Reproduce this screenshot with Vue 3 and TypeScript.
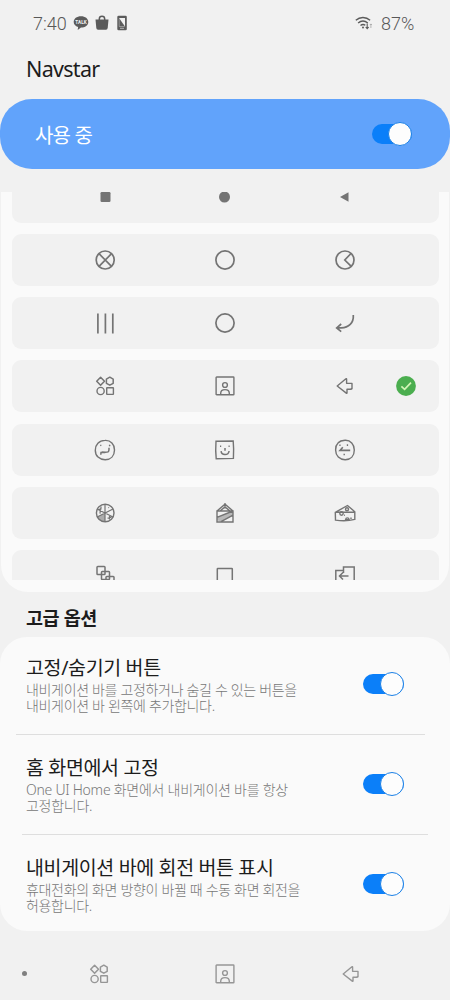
<script setup lang="ts">
import { ref } from 'vue'

interface Option {
  id: string
  title: string
  lines: string[]
  on: boolean
}

const squares =
  '<path d="M7.600 3.200 11.500 7.200 7.600 11.200 3.700 7.200Z" stroke-width="1.500" stroke-linejoin="round"/><path d="M16.800 3.200l3.400 1.900v4.200l-3.400 1.900-3.400-1.900V5.100Z" stroke-width="1.500" stroke-linejoin="round"/><circle cx="7.600" cy="17" r="3.600"/><rect x="13.700" y="13.700" width="6.700" height="6.700" rx=".4"/>'
const person =
  '<rect x="3.1" y="3" width="17.8" height="17.8" rx=".6"/><circle cx="12" cy="11" r="2.400"/><path d="M7.700 20.500v-1.300c0-2.300 1.900-3.600 4.300-3.600s4.300 1.300 4.300 3.600v1.300"/>'
const arrow = '<path d="M4.200 12 12.900 4.800q.7-.4.7.4v4h.7V9.400H19v5.400h-.8v.5H14v3.500q0 .8-.7.3Z" stroke-linejoin="round"/>'
const ring = '<circle cx="12" cy="12" r="9.100" stroke-width="1.700"/>'

const icons: Record<string, string> = {
  stop: '<rect x="7.5" y="7" width="10" height="10" rx="1.2" fill="currentColor" stroke="none"/>',
  dot: '<circle cx="11.5" cy="12" r="5.5" fill="currentColor" stroke="none"/>',
  play: '<path d="M7 12 15.500 7.200v9.600Z" fill="currentColor" stroke="none"/>',
  cross: '<g stroke-width="1.7"><circle cx="12.200" cy="12" r="9"/><path d="M6 5.7 18.500 18.300M18.500 5.700 6 18.300"/></g>',
  ring,
  clock: '<g stroke-width="1.7"><circle cx="12" cy="12" r="9"/><path d="M18 5.5 11.8 12l6.2 6.2"/></g>',
  bars: '<path d="M4.900 2.500v20M12.400 2.500v20M19.800 2.500v20" stroke-width="1.700"/>',
  back: '<path d="M20.300 4c.6 8.200-4.800 12.700-12 12.900H4.200M8.200 13l-4.500 3.900 4.500 3.700" stroke-width="1.700"/>',
  squares,
  person,
  arrow,
  faceA:
    '<path d="M12 2.4c5.7-.3 9.6 3.9 9.5 9.5-.1 5.9-3.7 9.7-9.3 9.8-6 0-9.900-3.800-9.900-9.500C2.300 6.600 6 2.500 12 2.400Z"/><path d="M7.300 7.200l1 .5M16 7.800l1.300-.6M16 9.800c.1 2.700-.3 3.900-.9 4.100-.6.200-5 .2-6.400.1M7.800 16.800l.2-2.300h4.200" stroke-width="1.500"/>',
  faceB:
    '<path d="M3 3.300 20.200 3c.6 5.800.5 11.800.2 17.400l-17.200.3C2.500 14.700 2.600 9 3 3.300Z"/><path d="M7 8.300h1.200M15.500 8.300h1.200M12 10v2.800M8.100 13.100c.3 4.500 7.300 4.700 8-.1" stroke-width="1.500"/>',
  faceC:
    '<path d="M12 2.300c5.500-.3 9.400 4 9.300 9.800 0 5.700-3.500 9.500-9 9.600-5.800.1-9.600-3.800-9.700-9.700C2.600 6.200 6.200 2.600 12 2.300Z"/><path d="M6.300 7.300h1.300M13.800 7.100h1.300M9.800 9.200 7 12.400h10.200M10.500 16.500h1.400" stroke-width="1.600"/>',
  pizza:
    '<path d="M12 12v8.700C8 20.700 5 19 4 16Z" fill="currentColor" fill-opacity=".55" stroke="none"/><circle cx="12.200" cy="12" r="8.800"/><path d="M12 3v18M4 8l16 8M4.200 16 20 8M5.500 8.500l3-.6M7 12.600l.4-5.300M15.300 6.500l.8.300M14.500 17.300l4-1.200M16.500 14v4.500M8 5.500v2" stroke-width="1.200"/>',
  cake:
    '<path d="M4 19.500v-3.300L20 9.700v4.700L9 20.500Z" fill="currentColor" fill-opacity=".45" stroke="none"/><path d="M4 10v11h16V10Zm0 0 8-6.800L20 10M12 2v5.500M7 10l5-4 5 4M4 16.400 20 10M8 20.700l12-6.500"/>',
  cheese:
    '<path d="M2.300 11.300 14.500 4.500l7.300 6.200v7.700c-6.500 1.700-13 1.700-19.300.7ZM2.300 11.300l19.500-.2"/><circle cx="14" cy="8.200" r="1.500"/><circle cx="8.500" cy="12.500" r="1.700"/><path d="M11 14.200h.8M12.600 18.700c.3-2.500 3.200-2.500 3.500 0ZM18 16.500v1.500"/>',
  stack:
    '<g stroke-width="1.500"><rect x="4" y="2.500" width="8" height="8" rx=".8"/><rect x="8.500" y="7.500" width="8" height="8" rx=".8"/><rect x="13" y="12.500" width="8" height="8" rx=".8"/></g>',
  frame: '<rect x="4.300" y="4.500" width="15" height="16" rx=".6" stroke-width="1.500"/>',
  exit: '<path d="M10.500 6.500H2.800V20M10.500 9V3h10.700v18M15.500 12H6.500M10 8.500 6.500 12l3.500 3.500" stroke-width="1.500"/>',
}

const styles: string[][] = [
  ['stop', 'dot', 'play'],
  ['cross', 'ring', 'clock'],
  ['bars', 'ring', 'back'],
  ['squares', 'person', 'arrow'],
  ['faceA', 'faceB', 'faceC'],
  ['pizza', 'cake', 'cheese'],
  ['stack', 'frame', 'exit'],
]

const selected = ref(3)
const enabled = ref(true)
const options = ref<Option[]>([
  { id: 'lock', title: '고정/숨기기 버튼', lines: ['내비게이션 바를 고정하거나 숨길 수 있는 버튼을', '내비게이션 바 왼쪽에 추가합니다.'], on: true },
  { id: 'home', title: '홈 화면에서 고정', lines: ['One UI Home 화면에서 내비게이션 바를 항상', '고정합니다.'], on: true },
  { id: 'rotate', title: '내비게이션 바에 회전 버튼 표시', lines: ['휴대전화의 화면 방향이 바뀔 때 수동 화면 회전을', '허용합니다.'], on: true },
])
</script>

<template>
  <div class="screen">
    <header class="status">
      <span class="time">7:40</span>
      <svg class="talk" width="16" height="16" viewBox="0 0 16 16">
        <path d="M8 1.300c4.200 0 7.300 2.400 7.300 5.600S12.200 12.500 8 12.500L4.700 15l.4-3C2.400 11.100.7 9.200.7 6.900.7 3.700 3.800 1.300 8 1.300Z" fill="#5b5b5b" />
        <text x="8" y="8.600" text-anchor="middle" font-size="4.700" font-weight="700" fill="#f1f1f1">TALK</text>
      </svg>
      <svg class="bag" width="14" height="16" viewBox="0 0 14 16">
        <path d="M4.300 5V4a2.700 2.700 0 0 1 5.400 0v1" fill="none" stroke="#5b5b5b" stroke-width="1.500" />
        <path d="M.5 4.500h13l-.8 8.500q-.2 1.700-1.700 1.700H3q-1.500 0-1.700-1.700Z" fill="#5b5b5b" />
      </svg>
      <svg class="phone" width="10" height="16" viewBox="0 0 10 16">
        <rect width="9.500" height="14.500" x=".3" y=".8" rx="1.300" fill="#5b5b5b" />
        <path d="M2 3h6v8.500Z" fill="#f1f1f1" />
        <path d="M2.200 3.500v8h5.500" fill="none" stroke="#bbb" stroke-width=".6" />
        <path d="M3 13.300h4" stroke="#ddd" stroke-width=".7" />
      </svg>
      <svg class="wifi" width="18" height="16" viewBox="0 0 18 16">
        <g fill="none" stroke="#5b5b5b" stroke-width="1.400">
          <path d="M.8 5.300c4.100-3.700 10.200-3.700 14.300 0M3.100 8c2.900-2.500 6.800-2.500 9.700 0M5.500 10.500c1.500-1.200 3.300-1.300 4.800-.2" />
          <path d="M12.200 8.500v5M10.700 12l1.500 1.700 1.500-1.700" stroke-width="1.100" />
          <path d="M15.900 13V9M14.900 10l1-1.100 1 1.100" stroke="#999" stroke-width=".7" />
        </g>
        <circle cx="8" cy="12.600" r="1" fill="#5b5b5b" />
      </svg>
      <span class="battery">87%</span>
    </header>

    <h1 class="app-title">Navstar</h1>

    <section class="master">
      <span class="master-label">사용 중</span>
      <button class="toggle small" :class="{ on: enabled }" @click="enabled = !enabled"><i class="knob"></i></button>
    </section>

    <section class="panel">
      <div class="viewport">
        <div v-for="(row, r) in styles" :key="r" class="style-row" @click="selected = r">
          <svg v-for="(name, c) in row" :key="c" class="icon" viewBox="0 0 24 24" v-html="icons[name]"></svg>
          <svg v-if="selected === r" class="check" viewBox="0 0 20 20">
            <circle cx="10" cy="10" r="9.900" fill="#4bae4f" />
            <path d="M5.400 10.300 8.600 13.300 15 6.700" fill="none" stroke="#d3f5b6" stroke-width="1.700" />
          </svg>
        </div>
      </div>
    </section>

    <h2 class="section-title">고급 옵션</h2>

    <section class="card">
      <div v-for="o in options" :key="o.id" class="option" :class="o.id">
        <div class="copy">
          <div class="option-title">{{ o.title }}</div>
          <div v-for="line in o.lines" :key="line" class="line">{{ line }}</div>
        </div>
        <button class="toggle" :class="{ on: o.on }" @click="o.on = !o.on"><i class="knob"></i></button>
      </div>
    </section>

    <nav class="navbar">
      <i class="pin-dot"></i>
      <svg class="icon" viewBox="0 0 24 24" v-html="squares"></svg>
      <svg class="icon" viewBox="0 0 24 24" v-html="person"></svg>
      <svg class="icon" viewBox="0 0 24 24" v-html="arrow"></svg>
    </nav>
  </div>
</template>

<style>
body {
  margin: 0;
  background: #f1f1f1;
}
</style>

<style scoped>
.screen {
  width: 450px;
  height: 1000px;
  overflow: hidden;
  display: flex;
  flex-direction: column;
  background: #f1f1f1;
  color: #1c1c1c;
  font-family: 'Noto Sans', 'Noto Sans CJK KR', sans-serif;
}
.status {
  height: 46px;
  box-sizing: border-box;
  padding: 0 36px 0 33px;
  display: flex;
  align-items: center;
  color: #585858;
  font-family: Roboto, sans-serif;
  font-size: 18px;
  font-weight: 300;
}
.time {
  width: 40px;
}
.bag {
  margin-left: 6px;
}
.phone {
  margin-left: 8px;
}
.wifi {
  margin-left: auto;
}
.battery {
  margin-left: 8px;
  width: 33px;
  white-space: nowrap;
}
.app-title {
  margin: 0;
  height: 53px;
  padding-left: 26px;
  line-height: 46px;
  font-size: 21.500px;
  font-weight: 400;
  letter-spacing: -0.700px;
}
.master {
  height: 70px;
  box-sizing: border-box;
  padding: 0 38px 0 35px;
  display: flex;
  align-items: center;
  justify-content: space-between;
  border-radius: 32px;
  background: #61a3fb;
}
.master-label {
  padding-top: 3px;
  color: #fff;
  font-size: 20px;
  line-height: 30px;
  letter-spacing: -0.800px;
}
.toggle {
  flex: none;
  width: 41px;
  height: 20px;
  padding: 0;
  border: 0;
  border-radius: 10px;
  display: flex;
  align-items: center;
  justify-content: flex-start;
  background: #b5b5b5;
}
.toggle.on {
  justify-content: flex-end;
  background: #0b7ff9;
}
.toggle.small {
  width: 40px;
}
.knob {
  flex: none;
  box-sizing: border-box;
  width: 24px;
  height: 24px;
  border: 1px solid #1b80e6;
  border-radius: 50%;
  background: #fdfdfd;
}
.panel {
  margin: 23px 1px 0;
  height: 400px;
  border-radius: 0 0 27px 27px;
  background: #fafafa;
}
.viewport {
  height: 388px;
  overflow: hidden;
  display: flex;
  flex-direction: column;
  gap: 11.300px;
}
.style-row {
  flex: none;
  height: 52px;
  margin: 0 10px 0 11px;
  box-sizing: border-box;
  padding-left: 81px;
  display: flex;
  align-items: center;
  gap: 96px;
  border-radius: 9px;
  background: #f1f1f1;
  color: #747474;
}
.style-row:first-child {
  margin-top: -21.500px;
}
.icon {
  flex: none;
  width: 24px;
  height: 24px;
  fill: none;
  stroke: currentColor;
  stroke-width: 1.400;
}
.check {
  flex: none;
  width: 20px;
  height: 20px;
  margin-left: -57px;
}
.section-title {
  margin: 0;
  height: 45px;
  padding-left: 26px;
  line-height: 52px;
  font-size: 18.500px;
  font-weight: 700;
  letter-spacing: -0.400px;
}
.card {
  height: 294px;
  border-radius: 27px;
  background: #fafafa;
}
.option {
  height: 100px;
  box-sizing: border-box;
  margin: 0 25px 0 16px;
  padding: 0 21px 3px 10px;
  display: flex;
  align-items: center;
  justify-content: space-between;
  border-bottom: 1px solid #dedede;
}
.option.lock {
  height: 98px;
}
.option.home {
  margin: 0 22px;
  padding: 0 24px 1px 4px;
}
.option.rotate {
  border: 0;
  padding-bottom: 2px;
}
.option-title {
  height: 28px;
  line-height: 28px;
  font-size: 19.500px;
  letter-spacing: -0.350px;
  white-space: nowrap;
}
.line {
  height: 16.500px;
  line-height: 16.500px;
  font-size: 14px;
  font-weight: 300;
  letter-spacing: -0.330px;
  color: #777;
  white-space: nowrap;
}
.home .line {
  letter-spacing: -0.260px;
}
.navbar {
  height: 69px;
  box-sizing: border-box;
  padding: 31px 0 0 22px;
  display: flex;
  align-items: flex-start;
  color: #969696;
}
.pin-dot {
  flex: none;
  width: 5px;
  height: 5px;
  margin: 9px 60px 0 0;
  border-radius: 50%;
  background: #808080;
}
.navbar .icon + .icon {
  margin-left: 102px;
}
</style>
